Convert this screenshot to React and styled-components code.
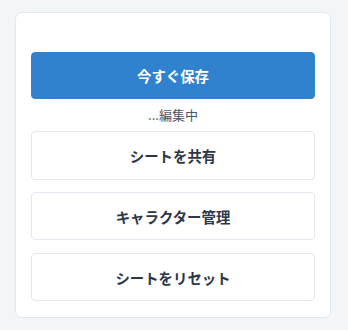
import React from "react";
import styled, { createGlobalStyle } from "styled-components";

const GlobalStyle = createGlobalStyle`
  html, body {
    margin: 0;
    padding: 0;
    background: #f3f6f9;
    font-family: "Noto Sans CJK JP", "Noto Sans", sans-serif;
  }
  * { box-sizing: border-box; }
`;

const Page = styled.div`
  padding: 12px 17px 12px 15px;
`;

// Panel holding the sheet actions
const Panel = styled.div`
  background: #ffffff;
  border: 1px solid #e2e8f0;
  border-radius: 7px;
  padding: 39px 15px 16px;
  display: flex;
  flex-direction: column;
  gap: 12.4px;
`;

const Button = styled.button`
  width: 100%;
  height: ${(p) => (p.$primary ? "47px" : "48.5px")};
  border-radius: 4px;
  border: 1px solid ${(p) => (p.$primary ? "#3182ce" : "#e2e8f0")};
  background: ${(p) => (p.$primary ? "#3182ce" : "#ffffff")};
  color: ${(p) => (p.$primary ? "#ffffff" : "#2d3748")};
  font-family: inherit;
  font-size: 14.4px;
  font-weight: 700;
  cursor: pointer;
`;

const SaveBlock = styled.div`
  display: flex;
  flex-direction: column;
`;

const Status = styled.div`
  text-align: center;
  font-size: 13px;
  line-height: 20px;
  color: #4a5568;
  margin: 6px 0 -6.4px;
`;

export default function App() {
  return (
    <>
      <GlobalStyle />
      <Page>
        <Panel>
          <SaveBlock>
            <Button $primary>今すぐ保存</Button>
            <Status>...編集中</Status>
          </SaveBlock>
          <Button>シートを共有</Button>
          <Button>キャラクター管理</Button>
          <Button>シートをリセット</Button>
        </Panel>
      </Page>
    </>
  );
}
